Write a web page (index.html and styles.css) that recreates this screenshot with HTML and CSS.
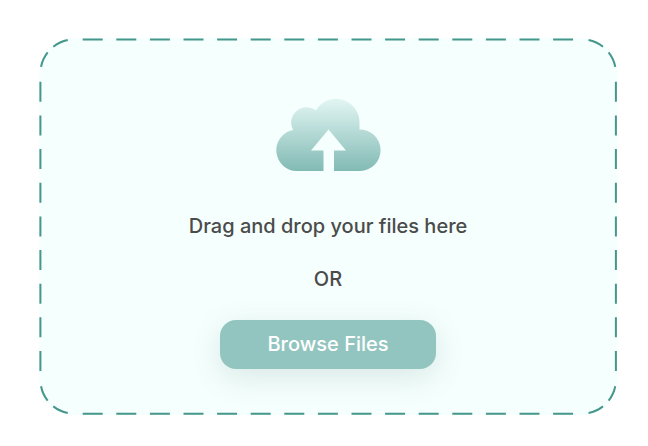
FILE: index.html
```html
<!DOCTYPE html>
<html lang="en">
<head>
  <meta charset="utf-8">
  <meta name="viewport" content="width=device-width, initial-scale=1">
  <title>File upload</title>
  <link rel="stylesheet" href="styles.css">
</head>
<body>
  <main class="dropzone">
    <svg class="outline" viewBox="0 0 578 377" preserveAspectRatio="none" aria-hidden="true">
      <path stroke-dasharray="20 13.6" d="M43.7 1.4H534.5M43.7 375.7H534.5"/>
      <path stroke-dasharray="20 13.65" d="M1.4 43.8V333.2M576.9 43.8V333.2"/>
      <path stroke-dasharray="0 6.7 16 8 16 10" d="M35.4 1.4A34 34 0 0 0 1.4 35.4M542.9 1.4A34 34 0 0 1 576.9 35.4M35.4 375.7A34 34 0 0 1 1.4 341.7M542.9 375.7A34 34 0 0 0 576.9 341.7"/>
    </svg>
    <svg class="cloud" viewBox="-2 0 106 73" aria-hidden="true">
      <defs>
        <linearGradient id="cloud-fill" x1="0" y1="0" x2="0" y2="1">
          <stop offset="0" stop-color="#e2f6f3"/>
          <stop offset="1" stop-color="#82bab4"/>
        </linearGradient>
      </defs>
      <path fill="url(#cloud-fill)" d="M20.5 73A20.7 20.7 0 0 1 16 32A15.5 15.5 0 0 1 39 12.3A23.4 23.4 0 0 1 82.5 24V31.4A20.8 20.8 0 0 1 83 73H57V52.5H69L51.5 31.5L34 52.5H46.5V73Z"/>
    </svg>
    <p class="message">Drag and drop your files here</p>
    <p class="message">OR</p>
    <button class="browse" type="button">Browse Files</button>
  </main>
</body>
</html>
```
FILE: styles.css
```css
* {
  box-sizing: border-box;
}

body {
  margin: 0;
  padding: 38px 31px 31px 39px;
  background: #ffffff;
  font-family: Inter, "Liberation Sans", sans-serif;
}

.dropzone {
  position: relative;
  display: flex;
  flex-direction: column;
  align-items: center;
  padding: 60px 24px 46px;
  border-radius: 34px;
  background: #f5fffe;
}

.outline {
  position: absolute;
  inset: 0;
  width: 100%;
  height: 100%;
  pointer-events: none;
}

.outline path {
  fill: none;
  stroke: #45968b;
  stroke-width: 2;
}

.cloud {
  width: 106px;
  height: 73px;
  margin-bottom: 43px;
}

.message {
  margin: 0 0 29px;
  color: #4b4b4b;
  font-size: 20px;
  font-weight: 500;
  line-height: 24px;
}

.browse {
  padding: 12px 47px 13px;
  border: 0;
  border-radius: 16px;
  background: #93c5c0;
  box-shadow: 0 8px 30px rgba(70, 110, 100, 0.16);
  color: #ffffff;
  font-family: inherit;
  font-size: 20px;
  font-weight: 500;
  line-height: 24px;
  cursor: pointer;
}
```
